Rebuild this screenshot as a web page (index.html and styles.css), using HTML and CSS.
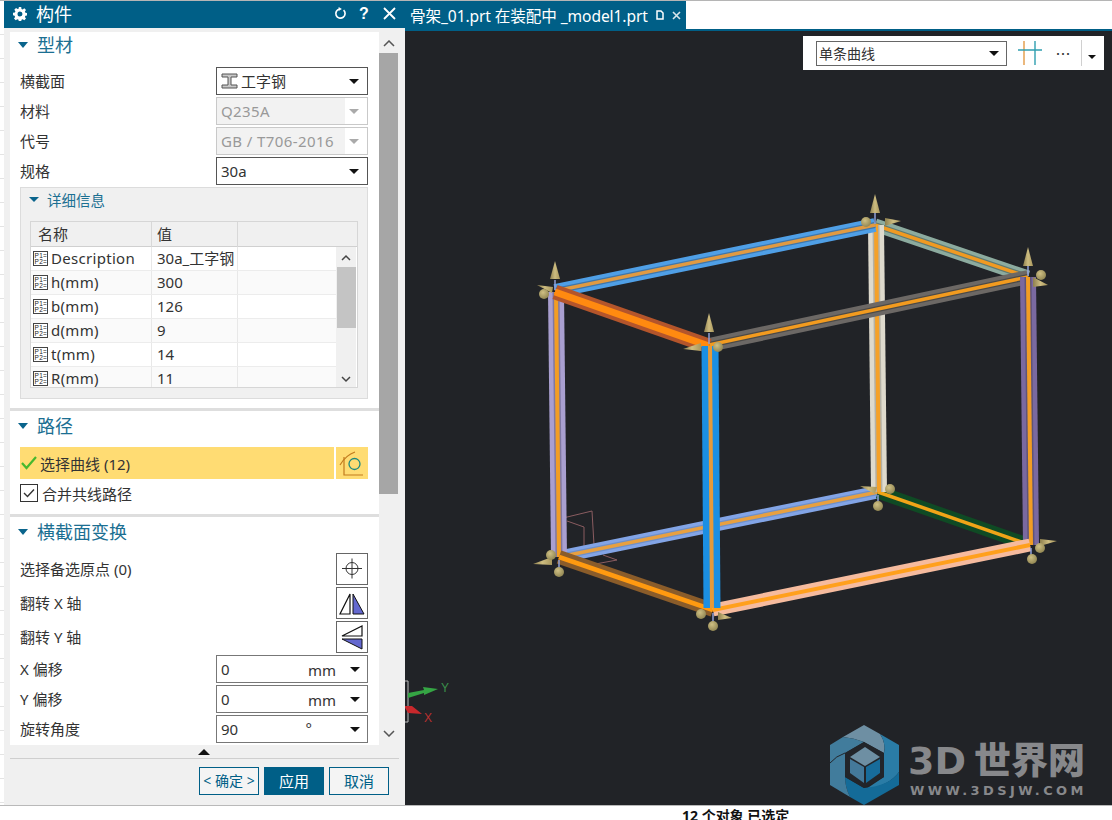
FILE: index.html
```html
<!DOCTYPE html>
<html lang="zh">
<head>
<meta charset="utf-8">
<title>构件</title>
<link rel="stylesheet" href="styles.css">
</head>
<body>
<svg class="defs" width="0" height="0">
  <defs>
    <symbol id="p12" viewBox="0 0 15 15">
      <rect x="0.5" y="0.5" width="14" height="14" fill="#fff" stroke="#444"/>
      <text x="1.500" y="6.800" font-size="6.500" font-family="Liberation Sans" fill="#222">P1=</text>
      <text x="1.500" y="13.300" font-size="6.500" font-family="Liberation Sans" fill="#222">P2=</text>
    </symbol>
    <linearGradient id="cone" x1="0" y1="0" x2="1" y2="0">
      <stop offset="0" stop-color="#8d7f4e"/>
      <stop offset="0.5" stop-color="#cdbc80"/>
      <stop offset="1" stop-color="#a8965c"/>
    </linearGradient>
    <radialGradient id="ball" cx="0.4" cy="0.35" r="0.7">
      <stop offset="0" stop-color="#cfc084"/>
      <stop offset="1" stop-color="#8e8350"/>
    </radialGradient>
  </defs>
</svg>

<div class="app">
  <div class="strip"></div>

  <aside class="panel">
    <header class="titlebar">
      <svg class="ico-gear" width="14" height="14" viewBox="0 0 14 14"><path fill="#fff" fill-rule="evenodd" d="M5.800 0h2.400l.3 1.900 1.200.5 1.600-1.100 1.700 1.700-1.100 1.600.5 1.200 1.900.3v2.400l-1.900.3-.5 1.200 1.100 1.600-1.700 1.700-1.600-1.100-1.200.5-.3 1.900H5.800l-.3-1.900-1.200-.5-1.600 1.100-1.700-1.700 1.100-1.600-.5-1.200L0 8.200V5.800l1.900-.3.500-1.200-1.100-1.600 1.700-1.700 1.600 1.100 1.200-.5zM7 4.500a2.500 2.500 0 1 0 0 5 2.500 2.500 0 0 0 0-5z"/></svg>
      <span class="title-text">构件</span>
      <span class="title-tools">
        <svg width="13" height="13" viewBox="0 0 14 14"><path d="M10.300 3.300A5 5 0 1 1 6 2.100" fill="none" stroke="#fff" stroke-width="1.800"/><path d="M5 0l3.500 2.200L5 4.400z" fill="#fff"/></svg>
        <span class="help">?</span>
        <svg width="13" height="13" viewBox="0 0 13 13"><path d="M1 1l11 11M12 1L1 12" stroke="#fff" stroke-width="1.800"/></svg>
      </span>
    </header>

    <div class="scroll-row">
      <div class="content">
        <section class="sec">
          <h2 class="sec-head"><i class="tri"></i>型材</h2>
          <div class="rows first-rows">
            <div class="row"><label>横截面</label>
              <div class="sel">
                <svg class="ibeam" width="17" height="16" viewBox="0 0 17 16"><path d="M1 1h15v3h-6v8h6v3H1v-3h6V4H1z" fill="#c8c8c8" stroke="#555"/></svg>
                <span class="cjk-val">工字钢</span><i class="drop"></i>
              </div>
            </div>
            <div class="row"><label>材料</label><div class="sel off"><span>Q235A</span><i class="drop"></i></div></div>
            <div class="row"><label>代号</label><div class="sel off"><span>GB / T706-2016</span><i class="drop"></i></div></div>
            <div class="row"><label>规格</label><div class="sel"><span>30a</span><i class="drop"></i></div></div>
          </div>

          <div class="group">
            <h3 class="group-head"><i class="tri small"></i>详细信息</h3>
            <div class="table">
              <div class="thead"><span>名称</span><span>值</span><span></span></div>
              <div class="tbody">
                <div class="trows">
                  <div class="tr"><span class="n"><svg width="15" height="15"><use href="#p12"/></svg>Description</span><span class="v">30a_工字钢</span><span></span></div>
                  <div class="tr alt"><span class="n"><svg width="15" height="15"><use href="#p12"/></svg>h(mm)</span><span class="v">300</span><span></span></div>
                  <div class="tr"><span class="n"><svg width="15" height="15"><use href="#p12"/></svg>b(mm)</span><span class="v">126</span><span></span></div>
                  <div class="tr alt"><span class="n"><svg width="15" height="15"><use href="#p12"/></svg>d(mm)</span><span class="v">9</span><span></span></div>
                  <div class="tr"><span class="n"><svg width="15" height="15"><use href="#p12"/></svg>t(mm)</span><span class="v">14</span><span></span></div>
                  <div class="tr alt"><span class="n"><svg width="15" height="15"><use href="#p12"/></svg>R(mm)</span><span class="v">11</span><span></span></div>
                </div>
                <div class="tscroll">
                  <svg class="chev" width="10" height="7" viewBox="0 0 10 7"><path d="M1 6l4-4 4 4" fill="none" stroke="#444" stroke-width="1.500"/></svg>
                  <div class="tthumb"></div>
                  <svg class="chev" width="10" height="7" viewBox="0 0 10 7"><path d="M1 1l4 4 4-4" fill="none" stroke="#444" stroke-width="1.500"/></svg>
                </div>
              </div>
            </div>
          </div>
        </section>

        <section class="sec ruled">
          <h2 class="sec-head tall"><i class="tri"></i>路径</h2>
          <div class="pick-row">
            <div class="pick">
              <svg width="16" height="14" viewBox="0 0 16 14"><path d="M1 7l4.500 5L15 1" fill="none" stroke="#46b82e" stroke-width="2.200"/></svg>
              <span>选择曲线 (12)</span>
            </div>
            <div class="pick-btn">
              <svg width="26" height="26" viewBox="0 0 26 26"><path d="M1 15Q7 5 16 2" fill="none" stroke="#c27b1e" stroke-width="1.200"/><path d="M5 7v18h19" fill="none" stroke="#c27b1e" stroke-width="1.200"/><circle cx="15.500" cy="14" r="5.500" fill="none" stroke="#1f8a80" stroke-width="1.300"/></svg>
            </div>
          </div>
          <div class="check-row">
            <span class="box"><svg width="14" height="14" viewBox="0 0 14 14"><path d="M2 7l3.500 3.500L12 3.500" fill="none" stroke="#333" stroke-width="1.400"/></svg></span>
            <span>合并共线路径</span>
          </div>
        </section>

        <section class="sec ruled last">
          <h2 class="sec-head tall"><i class="tri"></i>横截面变换</h2>
          <div class="rows btn-rows">
            <div class="row tall-row"><label>选择备选原点 (0)</label>
              <span class="ibtn"><svg width="24" height="24" viewBox="0 0 24 24"><circle cx="12" cy="11.500" r="6" fill="none" stroke="#333"/><path d="M12 1.500v20M2 11.500h20" stroke="#333"/></svg></span>
            </div>
            <div class="row tall-row"><label>翻转 X 轴</label>
              <span class="ibtn"><svg width="26" height="24" viewBox="0 0 26 24"><path d="M11 3v20H1z" fill="#fff" stroke="#111" stroke-width="1.200"/><path d="M14 3v20h11z" fill="#6468cf" stroke="#111" stroke-width="1"/></svg></span>
            </div>
            <div class="row tall-row"><label>翻转 Y 轴</label>
              <span class="ibtn"><svg width="24" height="26" viewBox="0 0 24 26"><path d="M22 2v10H2z" fill="#fff" stroke="#111" stroke-width="1.200"/><path d="M22 25V15H2z" fill="#6468cf" stroke="#111" stroke-width="1"/></svg></span>
            </div>
            <div class="row"><label>X 偏移</label><div class="sel num"><span>0</span><em>mm</em><i class="drop"></i></div></div>
            <div class="row"><label>Y 偏移</label><div class="sel num"><span>0</span><em>mm</em><i class="drop"></i></div></div>
            <div class="row"><label>旋转角度</label><div class="sel num"><span>90</span><em class="deg">°</em><i class="drop"></i></div></div>
          </div>
        </section>
      </div>

      <div class="vscroll">
        <svg class="chev2" width="12" height="7" viewBox="0 0 12 7"><path d="M1 6l5-5 5 5" fill="none" stroke="#555" stroke-width="1.500"/></svg>
        <div class="vthumb"></div>
        <svg class="chev2" width="12" height="7" viewBox="0 0 12 7"><path d="M1 1l5 5 5-5" fill="none" stroke="#555" stroke-width="1.500"/></svg>
      </div>
    </div>

    <div class="collapse"><i class="up"></i></div>
    <footer class="actions">
      <button class="btn ok">&lt; 确定 &gt;</button>
      <button class="btn primary">应用</button>
      <button class="btn">取消</button>
    </footer>
  </aside>

  <main class="view">
    <div class="tabs">
      <div class="tab">
        <span class="tab-text">骨架_01.prt 在装配中 _model1.prt</span>
        <svg width="8" height="10" viewBox="0 0 8 10"><path d="M1 1h4l2 2v6H1z" fill="none" stroke="#fff" stroke-width="1.500"/></svg>
        <svg class="tab-x" width="9" height="9" viewBox="0 0 9 9"><path d="M1 1l7 7M8 1L1 8" stroke="#d8e6ec" stroke-width="1.600"/></svg>
      </div>
    </div>

    <div class="canvas">
      <svg class="scene" width="707" height="774" viewBox="405 31 707 774">
        <!-- datum frame -->
        <g fill="none" stroke="#8a5c60" stroke-width="1">
          <path d="M563 518L592 511L594 545M567 521L584 527L584 558M603 555L617 560L590 565"/>
        </g>
        <!-- rear edges -->
        <g fill="none" stroke-linecap="butt">
          <line x1="559" y1="557" x2="878" y2="492" stroke="#82a4e6" stroke-width="13"/>
          <line x1="559" y1="557" x2="878" y2="492" stroke="#6f90c8" stroke-width="6"/>
          <line x1="559" y1="557" x2="878" y2="492" stroke="#e8a040" stroke-width="3.500"/>

          <line x1="878" y1="492" x2="1030" y2="545" stroke="#0f4a24" stroke-width="13"/>
          <line x1="878" y1="492" x2="1030" y2="545" stroke="#f0a418" stroke-width="3.500"/>

          <line x1="875" y1="225" x2="1028" y2="277" stroke="#8cab9f" stroke-width="13"/>
          <line x1="875" y1="225" x2="1028" y2="277" stroke="#5f7a72" stroke-width="6"/>
          <line x1="875" y1="225" x2="1028" y2="277" stroke="#f09a22" stroke-width="3.500"/>

          <line x1="876" y1="225" x2="879" y2="492" stroke="#dedacd" stroke-width="16"/>
          <line x1="876" y1="225" x2="879" y2="492" stroke="#b4b1a5" stroke-width="7"/>
          <line x1="876" y1="225" x2="879" y2="492" stroke="#f5a128" stroke-width="4"/>

          <line x1="709" y1="345" x2="1028" y2="277" stroke="#6c6865" stroke-width="14"/>
          <line x1="709" y1="345" x2="1028" y2="277" stroke="#4c4a47" stroke-width="6"/>
          <line x1="709" y1="345" x2="1028" y2="277" stroke="#f29b1f" stroke-width="3.500"/>

          <line x1="555" y1="291" x2="875" y2="225" stroke="#4f9fe6" stroke-width="14"/>
          <line x1="555" y1="291" x2="875" y2="225" stroke="#3f76aa" stroke-width="6"/>
          <line x1="555" y1="291" x2="875" y2="225" stroke="#e09a42" stroke-width="3.500"/>

          <line x1="556" y1="292" x2="559" y2="557" stroke="#a99fd0" stroke-width="16"/>
          <line x1="556" y1="292" x2="559" y2="557" stroke="#7f78a0" stroke-width="7"/>
          <line x1="556" y1="292" x2="559" y2="557" stroke="#f29d24" stroke-width="4"/>

          <line x1="1028" y1="277" x2="1031" y2="545" stroke="#7a69a0" stroke-width="16"/>
          <line x1="1028" y1="277" x2="1031" y2="545" stroke="#5f5478" stroke-width="7"/>
          <line x1="1028" y1="277" x2="1031" y2="545" stroke="#f29d24" stroke-width="4"/>

          <line x1="555" y1="292" x2="709" y2="346" stroke="#b4552b" stroke-width="15"/>
          <line x1="555" y1="292" x2="709" y2="346" stroke="#ff8a10" stroke-width="7"/>

          <line x1="559" y1="557" x2="713" y2="610" stroke="#8a5c2a" stroke-width="14"/>
          <line x1="559" y1="557" x2="713" y2="610" stroke="#ff9a10" stroke-width="4.500"/>

          <line x1="713" y1="610" x2="1030" y2="545" stroke="#f6bb9e" stroke-width="13"/>
          <line x1="713" y1="610" x2="1030" y2="545" stroke="#ffa01c" stroke-width="4"/>

          <line x1="710" y1="346" x2="712" y2="608" stroke="#1b8fe2" stroke-width="17"/>
          <line x1="710" y1="346" x2="712" y2="608" stroke="#e59a3a" stroke-width="4"/>
        </g>

        <!-- stems -->
        <g stroke="#8ea0d8" stroke-width="1.500">
          <path d="M555 280v10M709 333v11M875 212v12M1028 264v12M559 560v10M713 613v10M878 495v9M1031 548v9"/>
        </g>

        <!-- cones -->
        <g fill="url(#cone)">
          <polygon points="555,261 550,279 560,279"/>
          <polygon points="709,313 704,332 714,332"/>
          <polygon points="875,194 870,213 880,213"/>
          <polygon points="1028,247 1023,266 1033,266"/>
          <polygon points="537,285 553,287 552,293"/>
          <polygon points="683,349 701,343 701,351"/>
          <polygon points="901,221 885,218 885,226"/>
          <polygon points="1048,285 1033,277 1033,287"/>
          <polygon points="533,564 552,557 552,565"/>
          <polygon points="732,618 718,612 718,620"/>
          <polygon points="860,486 877,487 875,494"/>
          <polygon points="1057,541 1040,539 1040,546"/>
        </g>

        <!-- balls -->
        <g fill="url(#ball)">
          <circle cx="544" cy="294" r="5"/>
          <circle cx="718" cy="347" r="5"/>
          <circle cx="866" cy="222" r="5"/>
          <circle cx="1041" cy="275" r="5"/>
          <circle cx="551" cy="555" r="5"/>
          <circle cx="559" cy="572" r="5"/>
          <circle cx="701" cy="614" r="5"/>
          <circle cx="713" cy="626" r="5"/>
          <circle cx="890" cy="489" r="5"/>
          <circle cx="878" cy="506" r="5"/>
          <circle cx="1040" cy="548" r="5"/>
          <circle cx="1032" cy="559" r="5"/>
        </g>

        <!-- triad -->
        <path d="M405 681h3v41h-3" fill="none" stroke="#bbb" stroke-width="1"/>
        <polygon points="408,693 424,690 423,687 438,689 424,695 424,693 408,698" fill="#35a544"/>
        <polygon points="404,706 412,706 422,714 408,713" fill="#c8282c"/>
        <text x="441" y="692" class="axis-y">Y</text>
        <text x="424" y="722" class="axis-x">X</text>

        <!-- watermark logo -->
        <g>
          <path d="M843 737L864 725L880 734Q886 743 884 753L864 742Q854 738 843 737Z" fill="#6e8fa3"/>
          <path d="M880 734L899 745V772Q889 786 866 789L884 777V753Q886 743 880 734Z" fill="#2a7ca6"/>
          <path d="M899 772V785L864 805L850 797Q845 787 845 777L864 788Q889 786 899 772Z" fill="#146b98"/>
          <path d="M850 797L830 785V745L843 737Q854 738 864 742L845 753V777Q845 787 850 797Z" fill="#417c9c"/>
          <path d="M830 763Q836 756 845 753" fill="none" stroke="#22252a" stroke-width="1"/>
          <polygon points="864,742 884,753 884,777 864,788 845,777 845,753" fill="#22252a"/>
          <polygon points="865,747 880,757 865,766 850,757" fill="#6e8fa3"/>
          <polygon points="850,759 864,767 864,783 850,773" fill="#44799a"/>
          <polygon points="880,759 866,767 866,783 880,773" fill="#176c9b"/>
        </g>
        <text x="908" y="774" class="wm-big"><tspan class="wm-latin">3D</tspan><tspan class="wm-cjk" dx="8">世界网</tspan></text>
        <text x="910" y="795" class="wm-small">WWW.3DSJW.COM</text>
      </svg>

      <div class="toolbar">
        <div class="tb-sel"><span>单条曲线</span><i class="drop"></i></div>
        <svg width="26" height="26" viewBox="0 0 26 26"><path d="M7 1v24" stroke="#e39a46" stroke-width="1.400"/><path d="M18 1v24M1 10h24" stroke="#2f9fb0" stroke-width="1.400"/></svg>
        <span class="dots">⋯</span>
        <span class="tb-sep"></span>
        <i class="drop mini"></i>
      </div>
    </div>
  </main>
</div>

<div class="status"><strong>12 个对象 已选定</strong></div>
</body>
</html>
```

FILE: styles.css
```css
* { box-sizing: border-box; }
html, body { margin: 0; padding: 0; }
body {
  width: 1112px;
  height: 820px;
  overflow: hidden;
  background: #fff;
  font-family: "Noto Sans", "Noto Sans CJK SC", sans-serif;
  font-size: 15px;
  color: #333;
  display: flex;
  flex-direction: column;
  border-top: 1px solid #b5b5b5;
}
.defs { position: absolute; }
.app { display: flex; height: 804px; }
.strip {
  width: 4px;
  background: repeating-linear-gradient(#fff 0 23px, #e4e4e4 23px 24px);
  background-position: 0 10px;
}

/* ---- dialog ---- */
.panel {
  width: 401px;
  background: #f0f0f0;
  padding-left: 6px;
  display: flex;
  flex-direction: column;
}
.titlebar {
  height: 27px;
  margin-left: -6px;
  margin-bottom: 4px;
  padding: 0 9px 2px;
  background: #005f87;
  color: #fff;
  display: flex;
  align-items: center;
}
.title-text { margin-left: 9px; font-size: 18px; line-height: 24px; }
.title-tools { margin-left: auto; display: flex; align-items: center; gap: 15px; }
.help { font: bold 16px "Liberation Sans", sans-serif; width: 9px; margin-left: -3px; }
.ico-gear { display: block; }

.scroll-row { display: flex; height: 713px; }
.content {
  width: 369px;
  background: #fff;
  overflow: hidden;
}
.sec { padding: 0 11px 0 10px; }
.sec.ruled { border-top: 3px solid #dedede; }
.sec:first-child { padding-bottom: 9px; }
.sec.ruled { padding-bottom: 12px; }
.sec.last { padding-bottom: 0; }
.sec-head {
  margin: 0 0 0 -2px;
  height: 28px;
  padding-bottom: 2px;
  font-size: 18px;
  font-weight: 400;
  color: #1b6f92;
  display: flex;
  align-items: center;
  gap: 9px;
  line-height: 24px;
}
.sec-head.tall { height: 32px; }
.tri {
  width: 0; height: 0;
  border-left: 5.5px solid transparent;
  border-right: 5.5px solid transparent;
  border-top: 6px solid #0a648c;
}
.tri.small { border-left-width: 5px; border-right-width: 5px; border-top-width: 5px; }

.rows { display: flex; flex-direction: column; gap: 2px; }
.first-rows { margin-top: 7px; }
.btn-rows { margin-top: 4px; }
.row { height: 28px; display: flex; align-items: center; justify-content: space-between; }
.tall-row { height: 32px; }
.row label { color: #333; padding-bottom: 2px; }

.sel {
  width: 152px;
  height: 28px;
  border: 1px solid #555;
  background: #fff;
  display: flex;
  align-items: center;
  padding: 0 4px;
  font-size: 15px;
}
.sel .drop { margin-left: auto; margin-right: 4px; }
.sel.off { border-color: #c9c9c9; color: #999; background: linear-gradient(90deg, #f2f2f2 128px, #fff 128px); letter-spacing: 0.4px; }
.sel.off .drop { border-top-color: #aaa; }
.sel.num { border-color: #777; }
.sel.num em { font-style: normal; margin-left: auto; margin-right: 14px; position: relative; top: 1px; }
.sel.num em.deg { margin-right: 38px; top: -1px; }
.sel.num .drop { margin: 0 3px 0 0; }
.ibeam { margin-right: 3px; }
.cjk-val { padding-bottom: 2px; }
.drop {
  width: 0; height: 0;
  border-left: 5px solid transparent;
  border-right: 5px solid transparent;
  border-top: 5px solid #111;
}

.group {
  margin-top: 2px;
  height: 212px;
  border: 1px solid #dcdcdc;
  background: #f0f0f0;
  padding: 0 9px;
}
.group-head {
  margin: 0;
  height: 33px;
  font-size: 14.500px;
  font-weight: 400;
  color: #1b6f92;
  display: flex;
  align-items: center;
  gap: 8px;
  padding-bottom: 10px;
}
.group-head .tri { margin-left: -1px; }
.table { border: 1px solid #d6d6d6; width: 328px; height: 167px; overflow: hidden; background: #fff; }
.thead {
  height: 25px;
  display: grid;
  grid-template-columns: 121px 86px 1fr;
  background: #f0f0f0;
  border-bottom: 1px solid #d0d0d0;
  line-height: 25px;
}
.thead span { border-right: 1px solid #d8d8d8; padding-left: 7px; }
.thead span:nth-child(2) { padding-left: 5px; }
.thead span:last-child { border-right: 0; }
.tbody { display: flex; height: 140px; }
.trows { width: 305px; overflow: hidden; }
.tr {
  height: 24px;
  display: grid;
  grid-template-columns: 121px 86px 1fr;
  border-bottom: 1px solid #ececec;
  line-height: 23px;
  background: #fff;
}
.tr.alt { background: #fafafa; }
.tr > span { border-right: 1px solid #e8e8e8; white-space: nowrap; overflow: hidden; }
.tr > span:last-child { border-right: 0; }
.tr .n { display: flex; align-items: center; gap: 3px; padding-left: 2px; letter-spacing: 0.3px; }
.tr .v { padding-left: 5px; }
.tscroll {
  width: 20px;
  background: #f0f0f0;
  display: flex;
  flex-direction: column;
  align-items: center;
}
.tscroll .chev { margin: 7px 0 6px; flex: none; }
.tthumb { width: 19px; height: 61px; background: #c4c4c4; flex: none; margin-bottom: 41px; }

.pick-row { margin-top: 4px; display: flex; gap: 2px; height: 32px; }
.pick {
  width: 314px;
  background: #ffdc73;
  display: flex;
  align-items: center;
  gap: 3px;
}
.pick svg { margin-left: 1px; }
.pick-btn {
  width: 32px;
  background: #ffdc73;
  display: flex;
  align-items: center;
  justify-content: center;
}
.check-row { margin-top: 5px; height: 18px; display: flex; align-items: center; gap: 4px; }
.box {
  width: 18px; height: 18px;
  border: 1px solid #333;
  display: flex; align-items: center; justify-content: center;
}
.ibtn {
  width: 32px; height: 32px;
  border: 1px solid #666;
  background: #fff;
  display: flex; align-items: center; justify-content: center;
}

.vscroll {
  width: 19px;
  background: #f0f0f0;
  display: flex;
  flex-direction: column;
  align-items: center;
}
.chev2 { flex: none; }
.vscroll .chev2:first-child { margin: 8px 0 6px; }
.vscroll .chev2:last-child { margin-top: 236px; }
.vthumb { width: 19px; height: 441px; background: #a6a6a6; flex: none; }

.collapse {
  height: 14px;
  width: 389px;
  border-bottom: 1px solid #cfcfcf;
  display: flex;
  justify-content: center;
  align-items: center;
}
.up {
  width: 0; height: 0;
  margin-left: -1px;
  border-left: 6px solid transparent;
  border-right: 6px solid transparent;
  border-bottom: 6px solid #111;
}
.actions { display: flex; justify-content: flex-end; gap: 5px; padding: 8px 16px 0 0; }
.btn {
  width: 60px; height: 28px;
  padding: 0;
  border: 1px solid #005f87;
  background: #f4f4f4;
  color: #005f87;
  font: 15px "Noto Sans", "Noto Sans CJK SC", sans-serif;
  line-height: 20px;
}
.btn.ok { font-size: 14px; }
.btn.primary { background: #005f87; color: #fff; }

/* ---- graphics window ---- */
.view { flex: 1; display: flex; flex-direction: column; }
.tabs { height: 30px; background: #fff; border-bottom: 2px solid #005f87; }
.tab {
  width: 281px;
  height: 28px;
  background: #005f87;
  color: #fff;
  display: flex;
  align-items: center;
  padding-left: 5px;
}
.tab-text { font-size: 15.600px; white-space: nowrap; letter-spacing: -0.1px; margin-right: 8px; }
.tab-x { margin-left: 8px; }
.canvas { flex: 1; background: #212327; position: relative; overflow: hidden; }
.scene { display: block; }
.axis-y { font: 12px "Liberation Sans", sans-serif; fill: #3a8f4a; }
.axis-x { font: 12px "Liberation Sans", sans-serif; fill: #b83030; }
.wm-big { fill: #87888b; font-weight: bold; }
.wm-latin { font: bold 38px "DejaVu Sans", sans-serif; }
.wm-cjk { font: 900 37px "Noto Sans CJK SC", sans-serif; }
.wm-small { font: bold 13px "DejaVu Sans", sans-serif; fill: #87888b; letter-spacing: 3.400px; }

.toolbar {
  position: absolute;
  left: 398px;
  top: 5px;
  width: 301px;
  height: 34px;
  background: #fff;
  display: flex;
  align-items: center;
  padding-left: 13px;
}
.tb-sel {
  width: 191px;
  height: 25px;
  border: 1px solid #666;
  display: flex;
  align-items: center;
  padding: 0 4px 0 2px;
  font-size: 14px;
  margin-right: 10px;
}
.tb-sel .drop { margin-left: auto; margin-right: 3px; }
.dots { margin-left: 8px; width: 24px; text-align: center; font-size: 15px; }
.tb-sep { width: 1px; height: 26px; background: #d0d0d0; margin-left: 6px; }
.drop.mini { border-left-width: 4px; border-right-width: 4px; border-top-width: 4px; margin: 7px 0 0 6px; }

/* ---- status ---- */
.status {
  flex: 1;
  border-top: 1px solid #b9b9b9;
  background: #fff;
  padding-left: 682px;
  color: #111;
  line-height: 20px;
  font-size: 14px;
  overflow: hidden;
  white-space: nowrap;
}
```
